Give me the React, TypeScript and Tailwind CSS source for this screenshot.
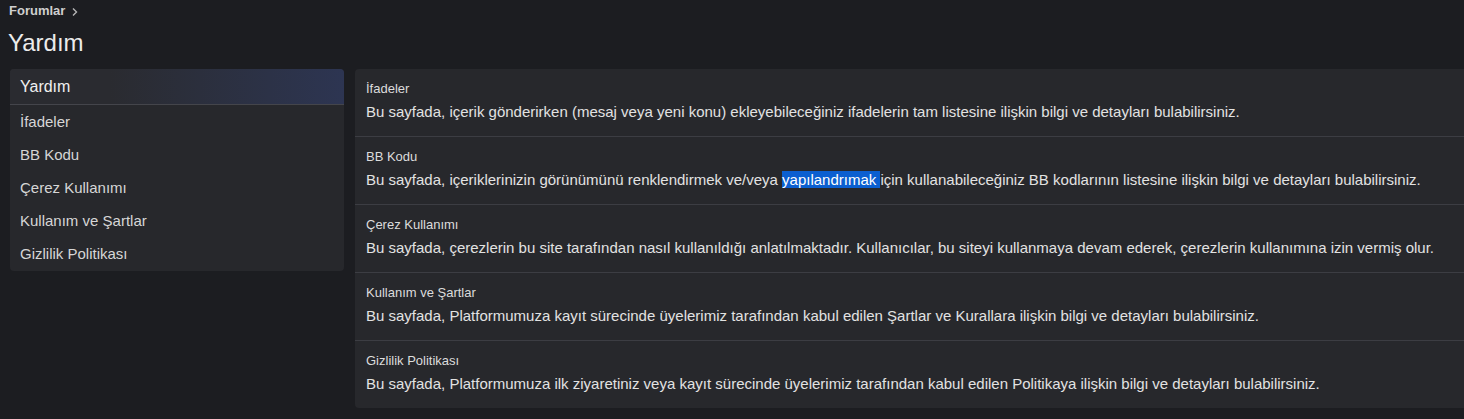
import React from "react";

const sections = [
  {
    title: "İfadeler",
    desc: "Bu sayfada, içerik gönderirken (mesaj veya yeni konu) ekleyebileceğiniz ifadelerin tam listesine ilişkin bilgi ve detayları bulabilirsiniz.",
  },
  {
    title: "BB Kodu",
    desc: null,
  },
  {
    title: "Çerez Kullanımı",
    desc: "Bu sayfada, çerezlerin bu site tarafından nasıl kullanıldığı anlatılmaktadır. Kullanıcılar, bu siteyi kullanmaya devam ederek, çerezlerin kullanımına izin vermiş olur.",
  },
  {
    title: "Kullanım ve Şartlar",
    desc: "Bu sayfada, Platformumuza kayıt sürecinde üyelerimiz tarafından kabul edilen Şartlar ve Kurallara ilişkin bilgi ve detayları bulabilirsiniz.",
  },
  {
    title: "Gizlilik Politikası",
    desc: "Bu sayfada, Platformumuza ilk ziyaretiniz veya kayıt sürecinde üyelerimiz tarafından kabul edilen Politikaya ilişkin bilgi ve detayları bulabilirsiniz.",
  },
];

const navItems = ["İfadeler", "BB Kodu", "Çerez Kullanımı", "Kullanım ve Şartlar", "Gizlilik Politikası"];

export default function App() {
  return (
    <div
      className="w-[1464px] h-[419px] bg-[#1c1d21] overflow-hidden"
      style={{ fontFamily: '"Liberation Sans", Arial, sans-serif' }}
    >
      <div className="pl-[9px] pt-[3px] h-[19px] flex items-center gap-[6px] text-[13px] font-bold text-[#cfcfcf] leading-[16px]">
        <span>Forumlar</span>
        <svg width="8" height="10" viewBox="0 0 8 10" className="mt-[1px]">
          <path d="M2 1.5 L5.5 5 L2 8.5" stroke="#b5b5b5" strokeWidth="1.4" fill="none" />
        </svg>
      </div>
      <h1 className="pl-[8px] mt-[11px] text-[24px] leading-[26px] text-[#ececec] font-normal">Yardım</h1>
      <div className="flex items-start gap-[11px] pl-[10px] mt-[13px]">
        <div className="w-[334px] shrink-0 bg-[#27282c] rounded-[4px] overflow-hidden">
          <div className="h-[36px] border-b border-[#44454b] bg-gradient-to-r from-[#2a2b30] from-30% to-[#2d3552] flex items-center pl-[10px] text-[16px] text-[#f0f0f0]">
            Yardım
          </div>
          <div className="pt-[1px]">
            {navItems.map((n) => (
              <div key={n} className="h-[33px] flex items-center pl-[10px] text-[15px] text-[#d6d6d6]">
                {n}
              </div>
            ))}
          </div>
        </div>
        <div className="flex-1 bg-[#27282c] rounded-l-[4px] overflow-hidden">
          {sections.map((s, i) => (
            <div
              key={s.title}
              className={`pl-[11px] pt-[11px] pb-[14px] ${i < sections.length - 1 ? "border-b border-[#3c3d43]" : ""}`}
            >
              <div className="text-[13px] leading-[17px] text-[#dcdcdc]">{s.title}</div>
              <div className="mt-[5px] text-[15px] leading-[20px] text-[#e2e2e2] whitespace-nowrap">
                {s.desc ?? (
                  <>
                    Bu sayfada, içeriklerinizin görünümünü renklendirmek ve/veya{" "}
                    <span className="bg-[#0b5fd0] text-white">yapılandrımak </span>için kullanabileceğiniz BB kodlarının
                    listesine ilişkin bilgi ve detayları bulabilirsiniz.
                  </>
                )}
              </div>
            </div>
          ))}
        </div>
      </div>
    </div>
  );
}
